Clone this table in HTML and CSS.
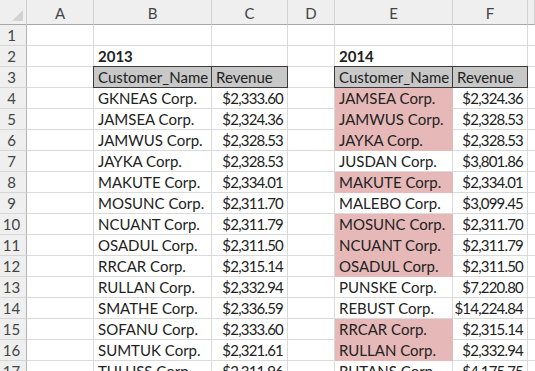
FILE: index.html
```html
<!DOCTYPE html>
<html>
<head>
<meta charset="utf-8">
<link rel="stylesheet" href="styles.css">
</head>
<body>
<div class="sheet">
  <div class="corner"><span class="tri"></span></div>
  <div class="ch">A</div><div class="ch">B</div><div class="ch">C</div><div class="ch">D</div><div class="ch">E</div><div class="ch">F</div><div class="ch"></div>

  <div class="rh">1</div><div class="c"></div><div class="c"></div><div class="c"></div><div class="c"></div><div class="c"></div><div class="c"></div><div class="c"></div>

  <div class="rh">2</div><div class="c"></div><div class="c bold">2013</div><div class="c"></div><div class="c"></div><div class="c bold">2014</div><div class="c"></div><div class="c"></div>

  <div class="rh">3</div><div class="c"></div><div class="c th first">Customer_Name</div><div class="c th">Revenue</div><div class="c"></div><div class="c th first">Customer_Name</div><div class="c th">Revenue</div><div class="c"></div>

  <div class="rh">4</div><div class="c"></div><div class="c">GKNEAS Corp.</div><div class="c num">$2,333.60</div><div class="c"></div><div class="c pink">JAMSEA Corp.</div><div class="c num">$2,324.36</div><div class="c"></div>

  <div class="rh">5</div><div class="c"></div><div class="c">JAMSEA Corp.</div><div class="c num">$2,324.36</div><div class="c"></div><div class="c pink">JAMWUS Corp.</div><div class="c num">$2,328.53</div><div class="c"></div>

  <div class="rh">6</div><div class="c"></div><div class="c">JAMWUS Corp.</div><div class="c num">$2,328.53</div><div class="c"></div><div class="c pink">JAYKA Corp.</div><div class="c num">$2,328.53</div><div class="c"></div>

  <div class="rh">7</div><div class="c"></div><div class="c">JAYKA Corp.</div><div class="c num">$2,328.53</div><div class="c"></div><div class="c">JUSDAN Corp.</div><div class="c num">$3,801.86</div><div class="c"></div>

  <div class="rh">8</div><div class="c"></div><div class="c">MAKUTE Corp.</div><div class="c num">$2,334.01</div><div class="c"></div><div class="c pink">MAKUTE Corp.</div><div class="c num">$2,334.01</div><div class="c"></div>

  <div class="rh">9</div><div class="c"></div><div class="c">MOSUNC Corp.</div><div class="c num">$2,311.70</div><div class="c"></div><div class="c">MALEBO Corp.</div><div class="c num">$3,099.45</div><div class="c"></div>

  <div class="rh">10</div><div class="c"></div><div class="c">NCUANT Corp.</div><div class="c num">$2,311.79</div><div class="c"></div><div class="c pink">MOSUNC Corp.</div><div class="c num">$2,311.70</div><div class="c"></div>

  <div class="rh">11</div><div class="c"></div><div class="c">OSADUL Corp.</div><div class="c num">$2,311.50</div><div class="c"></div><div class="c pink">NCUANT Corp.</div><div class="c num">$2,311.79</div><div class="c"></div>

  <div class="rh">12</div><div class="c"></div><div class="c">RRCAR Corp.</div><div class="c num">$2,315.14</div><div class="c"></div><div class="c pink">OSADUL Corp.</div><div class="c num">$2,311.50</div><div class="c"></div>

  <div class="rh">13</div><div class="c"></div><div class="c">RULLAN Corp.</div><div class="c num">$2,332.94</div><div class="c"></div><div class="c">PUNSKE Corp.</div><div class="c num">$7,220.80</div><div class="c"></div>

  <div class="rh">14</div><div class="c"></div><div class="c">SMATHE Corp.</div><div class="c num">$2,336.59</div><div class="c"></div><div class="c">REBUST Corp.</div><div class="c num">$14,224.84</div><div class="c"></div>

  <div class="rh">15</div><div class="c"></div><div class="c">SOFANU Corp.</div><div class="c num">$2,333.60</div><div class="c"></div><div class="c pink">RRCAR Corp.</div><div class="c num">$2,315.14</div><div class="c"></div>

  <div class="rh">16</div><div class="c"></div><div class="c">SUMTUK Corp.</div><div class="c num">$2,321.61</div><div class="c"></div><div class="c pink">RULLAN Corp.</div><div class="c num">$2,332.94</div><div class="c"></div>

  <div class="rh">17</div><div class="c"></div><div class="c">TULUSS Corp.</div><div class="c num">$2,311.96</div><div class="c"></div><div class="c">RUTANS Corp.</div><div class="c num">$4,175.75</div><div class="c"></div>
</div>
</body>
</html>
```

FILE: styles.css
```css
html, body {
  margin: 0;
  padding: 0;
  background: #ffffff;
  overflow: hidden;
}

.sheet {
  display: grid;
  grid-template-columns: 27px 67px 118px 76px 47px 118px 75px 7px;
  grid-template-rows: 25px repeat(17, 21px);
  width: 535px;
  height: 371px;
  overflow: hidden;
  font-family: Lato, "Open Sans", sans-serif;
  font-size: 15px;
  color: #222222;
}

.corner {
  position: relative;
  background: #efefef;
  border-right: 1px solid #cfcfcf;
  border-bottom: 1px solid #a8a8a8;
}

.tri {
  position: absolute;
  right: 3px;
  bottom: 3px;
  width: 0;
  height: 0;
  border-left: 11px solid transparent;
  border-bottom: 11px solid #d2d2d2;
}

.ch {
  background: #efefef;
  border-right: 1px solid #d2d2d2;
  border-bottom: 1px solid #a8a8a8;
  display: flex;
  align-items: center;
  justify-content: center;
  color: #444;
  font-size: 15px;
  padding-top: 1px;
}

.rh {
  background: #efefef;
  border-right: 1px solid #b4b4b4;
  border-bottom: 1px solid #d6d6d6;
  display: flex;
  align-items: flex-end;
  justify-content: center;
  color: #444;
  padding-bottom: 1px;
  padding-right: 3px;
}

.c {
  border-right: 1px solid #dadada;
  border-bottom: 1px solid #dadada;
  display: flex;
  align-items: flex-end;
  justify-self: stretch;
  padding: 0 4px 1px 4px;
  white-space: nowrap;
  min-width: 0;
}

.bold {
  font-weight: bold;
}

.num {
  justify-content: flex-end;
  letter-spacing: -0.8px;
  padding-right: 4px;
}

.th {
  background: #c8c8c8;
  border: 1px solid #3c3c3c;
  border-left: none;
  margin-top: -1px;
  color: #222222;
}

.th.first {
  border-left: 1px solid #3c3c3c;
  margin-left: -1px;
}

.pink {
  background: #e6b9b8;
  border-right-color: #e6b9b8;
  border-bottom-color: #e6b9b8;
}
```
